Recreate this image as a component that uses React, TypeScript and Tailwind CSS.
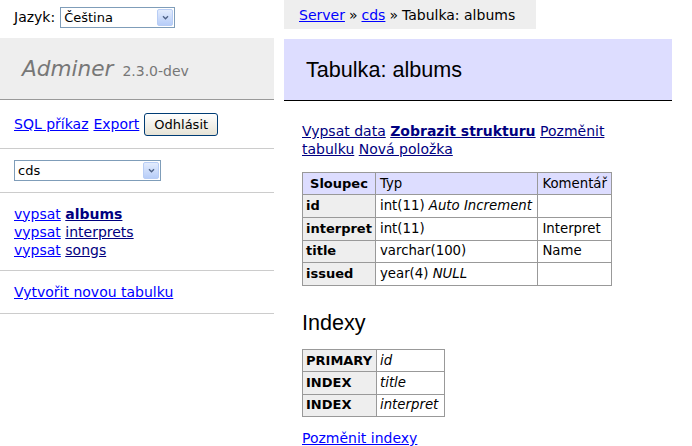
import React from 'react'

// Adminer 2.3.0-dev: table structure page for "albums"

const font = { fontFamily: '"DejaVu Sans", Verdana, sans-serif' }
const headFont = { fontFamily: '"Liberation Sans", Arial, sans-serif' }

function FakeSelect({ value, width }: { value: string; width: string }) {
    return (
        <div className={`flex h-[21px] items-center border border-[#7f9db9] bg-white pl-[3px] pr-[1px] ${width}`}>
            <span className="flex-1 text-[13px] leading-none text-black">{value}</span>
            <span className="flex h-[17px] w-[16px] items-center justify-center rounded-[2px] border border-[#b8cdf5] bg-gradient-to-b from-[#e3ecfd] to-[#b7cdf8]">
                <svg viewBox="0 0 8 6" className="h-[5px] w-[7px]" aria-hidden>
                    <path d="M1 1.5 4 4.5 7 1.5" fill="none" stroke="#4d6185" strokeWidth="1.6" />
                </svg>
            </span>
        </div>
    )
}

const rows: { name: string; type: string; extra?: string; comment: string }[] = [
    { name: 'id', type: 'int(11)', extra: 'Auto Increment', comment: '' },
    { name: 'interpret', type: 'int(11)', comment: 'Interpret' },
    { name: 'title', type: 'varchar(100)', comment: 'Name' },
    { name: 'issued', type: 'year(4)', extra: 'NULL', comment: '' },
]

const indexes = [
    ['PRIMARY', 'id'],
    ['INDEX', 'title'],
    ['INDEX', 'interpret'],
]

const link = 'text-[#0000ff] underline'
const visited = 'text-[#000080] underline'
const cell = 'whitespace-nowrap border border-[#999] px-[4px]'
const rowHead = 'whitespace-nowrap border border-[#999] bg-[#eee] px-[3px] text-left text-[13px] font-bold'

export default function App() {
    return (
        <div className="flex min-h-[446px] w-[692px] bg-white text-[14px] leading-[18px] text-black" style={font}>
            {/* menu */}
            <div className="w-[274px] shrink-0">
                <div className="flex h-[38px] items-start pl-[14px] pt-[7px]">
                    <span className="mr-[5px] mt-[1px]">Jazyk:</span>
                    <FakeSelect value="Čeština" width="w-[115px]" />
                </div>
                <h1 className="flex h-[62px] items-center border-b border-[#999] bg-[#eee] pl-[22px] font-normal text-[#777]">
                    <span className="flex items-baseline">
                        <span className="text-[21.6px] italic leading-[27px]">Adminer</span>
                        <span className="ml-[9px] text-[14px] leading-[18px]">2.3.0-dev</span>
                    </span>
                </h1>
                <div className="flex h-[49px] items-center gap-[5px] border-b border-[#ccc] pl-[14px]">
                    <a className={link}>SQL příkaz</a>
                    <a className={link}>Export</a>
                    <button className="h-[23px] rounded-[3px] border border-[#003c74] bg-gradient-to-b from-white to-[#e6e3d6] px-[9px] text-[13px] font-normal leading-none">
                        Odhlásit
                    </button>
                </div>
                <div className="flex h-[44px] items-center border-b border-[#ccc] pl-[14px]">
                    <FakeSelect value="cds" width="w-[147px]" />
                </div>
                <div className="flex h-[78px] flex-col justify-center border-b border-[#ccc] pl-[14px]">
                    <div>
                        <a className={link}>vypsat</a> <a className={`${visited} font-bold`}>albums</a>
                    </div>
                    <div>
                        <a className={link}>vypsat</a> <a className={visited}>interprets</a>
                    </div>
                    <div>
                        <a className={link}>vypsat</a> <a className={visited}>songs</a>
                    </div>
                </div>
                <div className="flex h-[43px] items-center border-b border-[#ccc] pl-[14px]">
                    <a className={link}>Vytvořit novou tabulku</a>
                </div>
            </div>

            {/* content */}
            <div className="ml-[10px] w-[388px]">
                <div className="flex h-[29px] w-[252px] items-center bg-[#eee] pl-[15px]">
                    <a className={link}>Server</a>
                    <span className="mx-[4px]">»</span>
                    <a className={link}>cds</a>
                    <span className="mx-[4px]">»</span>
                    <span>Tabulka: albums</span>
                </div>
                <h2
                    className="mt-[10px] flex h-[62px] items-center border-b border-black bg-[#ddf] pl-[22px] text-[21.6px] font-normal leading-[27px]"
                    style={headFont}
                >
                    Tabulka: albums
                </h2>
                <div className="pl-[18px]">
                    <p className="mt-[21px] w-[320px]">
                        <a className={visited}>Vypsat data</a> <a className={`${visited} font-bold`}>Zobrazit strukturu</a>{' '}
                        <a className={visited}>Pozměnit tabulku</a> <a className={visited}>Nová položka</a>
                    </p>
                    <table className="mt-[14px] w-[310px] border-collapse text-[13.3px]">
                        <thead>
                            <tr className="h-[22px] bg-[#ddf]">
                                <th className="w-[73px] whitespace-nowrap border border-[#999] px-[3px] text-center text-[13px] font-bold">
                                    Sloupec
                                </th>
                                <td className={`w-[165px] ${cell}`}>Typ</td>
                                <td className={cell}>Komentář</td>
                            </tr>
                        </thead>
                        <tbody>
                            {rows.map(r => (
                                <tr key={r.name} className="h-[22.8px]">
                                    <th className={rowHead}>{r.name}</th>
                                    <td className={cell}>
                                        {r.type} {r.extra && <i>{r.extra}</i>}
                                    </td>
                                    <td className={cell}>{r.comment}</td>
                                </tr>
                            ))}
                        </tbody>
                    </table>
                    <h3 className="mt-[23px] text-[21.6px] font-normal leading-[27px]" style={headFont}>
                        Indexy
                    </h3>
                    <table className="mt-[13px] w-[143px] border-collapse text-[13.3px]">
                        <tbody>
                            {indexes.map(([kind, col], i) => (
                                <tr key={i} className="h-[22.3px]">
                                    <th className={`w-[74px] ${rowHead}`}>{kind}</th>
                                    <td className="whitespace-nowrap border border-[#999] px-[3px] italic">{col}</td>
                                </tr>
                            ))}
                        </tbody>
                    </table>
                    <p className="mt-[12px]">
                        <a className={link}>Pozměnit indexy</a>
                    </p>
                </div>
            </div>
        </div>
    )
}
